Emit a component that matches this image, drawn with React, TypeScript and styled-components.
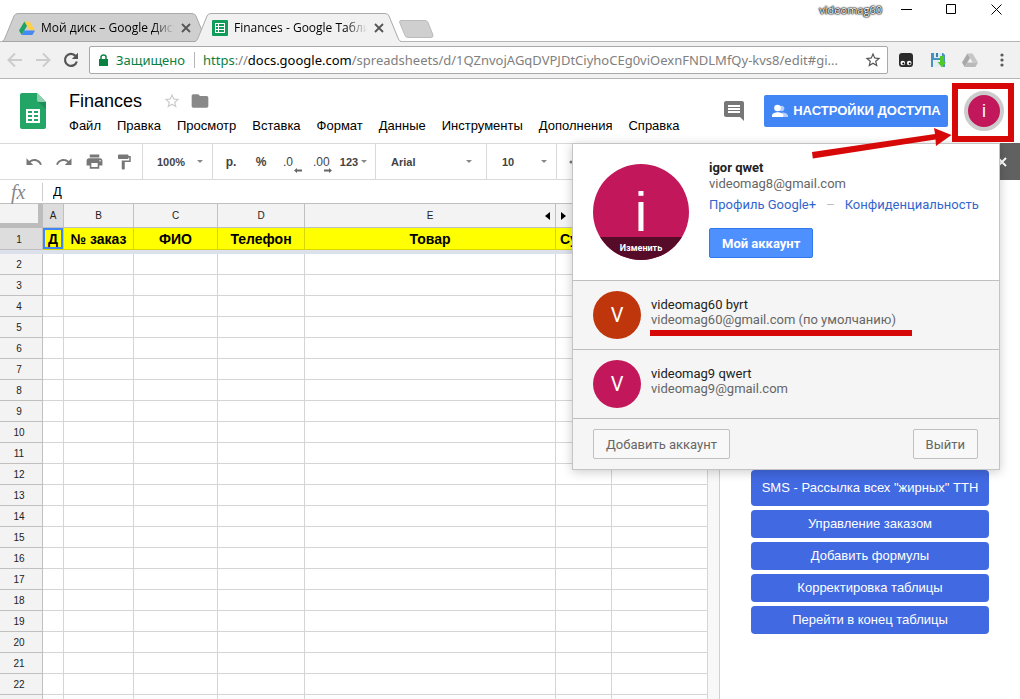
import React from 'react';
import styled, { createGlobalStyle } from 'styled-components';
import { MdUndo, MdRedo, MdPrint, MdFormatPaint, MdComment, MdFolder, MdStarBorder } from 'react-icons/md';

const sans = `"Liberation Sans", Arial, sans-serif`;
const system = `"Open Sans", "Noto Sans", sans-serif`;
const roboto = `Roboto, sans-serif`;

const GlobalStyle = createGlobalStyle`
  *, *::before, *::after { box-sizing: border-box; }
  body { margin: 0; background: #fff; font-family: ${sans}; color: #000; }
  button, input, select { font: inherit; color: inherit; margin: 0; padding: 0; border: 0; background: none; }
  button { cursor: pointer; }
  svg { display: block; flex: none; }
`;

const Screen = styled.div`
  display: flex;
  flex-direction: column;
  height: 100vh;
  overflow: hidden;
`;

/* ---------- Browser frame ---------- */

const TabStrip = styled.div`
  display: flex;
  align-items: flex-end;
  height: 42px;
  flex: none;
  padding-left: 2px;
  box-shadow: inset 0 -1px #b5b5b5;
  font: 12px/16px ${system};
`;

const Tab = styled.div<{ $active?: boolean }>`
  position: relative;
  z-index: ${p => (p.$active ? 2 : 1)};
  display: flex;
  align-items: center;
  width: 206px;
  height: 29px;
  margin-right: -13px;
  padding: 0 17px;
`;

const TabShape = styled.svg`
  position: absolute;
  inset: 0;
  z-index: -1;
`;

const TabTitle = styled.span`
  flex: 1;
  margin: 0 7px 0 6px;
  overflow: hidden;
  white-space: nowrap;
  mask-image: linear-gradient(to right, #000 84%, transparent);
`;

const IconButton = styled.button`
  display: flex;
  align-items: center;
  justify-content: center;
  color: inherit;
`;

const NewTab = styled(IconButton)`
  margin: 0 0 4px 11px;
`;

const WindowControls = styled.div`
  display: flex;
  align-items: center;
  align-self: flex-start;
  height: 19px;
  margin-left: auto;
`;

const UserBadge = styled.span`
  margin-right: 19px;
  font: 11px/16px ${system};
  color: #fff;
  text-shadow: 0 0 1px #000, 0 0 1px #000, 0 0 2px #222, 0 0 2px #222;
`;

const WindowButton = styled(IconButton)`
  width: 11px;
  height: 11px;
  margin-right: 34px;
  &:last-child { margin-right: 18px; }
`;

const AddressRow = styled.div`
  display: flex;
  align-items: center;
  flex: none;
  height: 37px;
  padding: 0 10px 0 7px;
  background: #f1f1f1;
  border-bottom: 1px solid #b5b5b5;
  color: #555;
`;

const NavButtons = styled.div`
  display: flex;
  gap: 12px;
  width: 82px;
`;

const AddressBox = styled.div`
  display: flex;
  align-items: center;
  flex: 1;
  min-width: 0;
  height: 28px;
  padding: 0 5px 0 9px;
  border: 1px solid #a9a9a9;
  border-radius: 2px;
  background: #fff;
  font: 13px/20px "Noto Sans", sans-serif;
`;

const Secure = styled.span`
  margin-left: 8px;
  padding-right: 9px;
  border-right: 1px solid #b5b5b5;
  line-height: 16px;
  color: #0b8043;
`;

const Url = styled.div`
  flex: 1;
  min-width: 0;
  margin: 0 8px;
  overflow: hidden;
  white-space: nowrap;
  text-overflow: ellipsis;
  color: #808080;
  b { font-weight: 400; color: #0b8043; }
  em { font-style: normal; color: #000; }
`;

const Extensions = styled.div`
  display: flex;
  align-items: center;
  gap: 16px;
  margin-left: 10px;
`;

/* ---------- Document header ---------- */

const Header = styled.header`
  position: relative;
  z-index: 5;
  display: flex;
  flex: none;
  height: 64px;
  padding: 0 16px 0 20px;
`;

const Logo = styled.svg`
  margin-top: 14px;
`;

const DocInfo = styled.div`
  flex: 1;
  min-width: 0;
  margin-left: 15px;
`;

const TitleRow = styled.div`
  display: flex;
  align-items: center;
  gap: 9px;
  height: 24px;
  margin-top: 10px;
  padding-left: 8px;
`;

const Title = styled.h1`
  margin: 0 12px 0 0;
  font: 18px/24px ${sans};
`;

const MenuBar = styled.nav`
  display: flex;
  margin-top: 4px;
`;

const MenuButton = styled.button`
  padding: 0 8px;
  font: 13px/18px ${sans};
  white-space: nowrap;
`;

const HeaderActions = styled.div`
  display: flex;
  align-items: center;
  height: 64px;
`;

const ShareButton = styled.button`
  display: flex;
  align-items: center;
  justify-content: center;
  gap: 4px;
  width: 184px;
  height: 32px;
  margin: 0 16px 0 18px;
  border-radius: 2px;
  background: #4285f4;
  color: #fff;
  font: bold 13px/20px ${sans};
  white-space: nowrap;
`;

const AccountButton = styled.button`
  width: 40px;
  height: 40px;
  border: 4px solid #ccc;
  border-radius: 50%;
  background: #c2185b;
  color: #fff;
  font: 18px/32px ${sans};
`;

const RedFrame = styled.div`
  position: absolute;
  top: 4px;
  right: 6px;
  width: 62px;
  height: 59px;
  border: 6px solid #d60808;
  pointer-events: none;
`;

const RedArrow = styled.svg`
  position: absolute;
  top: 48px;
  right: 68px;
  z-index: 2;
  pointer-events: none;
`;

/* ---------- Account popup ---------- */

const Popup = styled.section`
  position: absolute;
  top: 64px;
  right: 20px;
  width: 428px;
  border: 1px solid #c4c4c4;
  background: #f5f5f5;
  box-shadow: 0 2px 10px rgba(0, 0, 0, 0.2);
  font: 13px/15px ${roboto};
  color: #666;
`;

const CurrentAccount = styled.div`
  display: flex;
  gap: 20px;
  height: 137px;
  padding: 20px;
  border-bottom: 1px solid #bfbfbf;
  background: #fff;
`;

const BigAvatar = styled.button`
  display: flex;
  flex-direction: column;
  width: 96px;
  height: 96px;
  overflow: hidden;
  border-radius: 50%;
  background: #c2185b;
  color: #fff;
  text-align: center;
  font: 56px/96px ${sans};
`;

const BigLetter = styled.span`
  width: 100%;
  height: 73px;
`;

const ChangeLabel = styled.span`
  width: 100%;
  height: 23px;
  background: #560b28;
  font: bold 9px/23px ${roboto};
`;

const AccountDetails = styled.div`
  display: flex;
  flex-direction: column;
  align-items: flex-start;
  margin-top: -4px;
`;

const AccountName = styled.strong<{ $plain?: boolean }>`
  display: block;
  margin-bottom: ${p => (p.$plain ? 0 : 1)}px;
  font-weight: ${p => (p.$plain ? 400 : 700)};
  color: #222;
`;

const LinkRow = styled.div`
  display: flex;
  gap: 10px;
  margin: 6px 0 16px;
  color: #bbb;
  a { color: #36c; text-decoration: none; }
`;

const PrimaryButton = styled.button`
  height: 30px;
  padding: 0 12px;
  border: 1px solid #3079ed;
  border-radius: 2px;
  background: #4d90fe;
  color: #fff;
  font-weight: 700;
`;

const AccountRow = styled.button`
  display: flex;
  gap: 10px;
  width: 100%;
  height: 69px;
  padding: 10px 20px;
  border-bottom: 1px solid #bfbfbf;
  text-align: left;
`;

const Avatar = styled.span<{ $color: string }>`
  width: 48px;
  height: 48px;
  border-radius: 50%;
  background: ${p => p.$color};
  color: #fff;
  text-align: center;
  font: 20px/48px ${roboto};
`;

const AccountText = styled.span`
  position: relative;
  padding-top: 6px;
`;

const Underline = styled.span`
  position: absolute;
  top: 39px;
  left: -1px;
  width: 262px;
  height: 6px;
  background: #d60808;
`;

const PopupFooter = styled.div`
  display: flex;
  justify-content: space-between;
  padding: 10px 21px 10px 20px;
`;

const PlainButton = styled.button`
  height: 30px;
  padding: 0 12px;
  border: 1px solid #c0c0c0;
  border-radius: 2px;
  background: #f8f8f8;
`;

/* ---------- Workspace ---------- */

const Workspace = styled.div`
  display: flex;
  flex: 1;
  min-height: 0;
`;

const Sheet = styled.main`
  display: flex;
  flex-direction: column;
  flex: 1;
  min-width: 0;
`;

const Toolbar = styled.div`
  display: flex;
  flex: none;
  height: 37px;
  border: solid #d9d9d9;
  border-width: 1px 0;
  overflow: hidden;
  color: #777;
`;

const ToolGroup = styled.div<{ $width?: number; $pad: number }>`
  display: flex;
  align-items: center;
  flex: none;
  width: ${p => (p.$width ? `${p.$width}px` : 'auto')};
  padding-left: ${p => p.$pad}px;
  border-right: ${p => (p.$width ? '1px solid #d9d9d9' : '0')};
`;

const ToolButton = styled(IconButton)`
  width: 30px;
  height: 30px;
  color: #777;
`;

const TextTool = styled(ToolButton)<{ $size?: number }>`
  color: #444;
  font: bold ${p => p.$size ?? 12}px/16px ${sans};
`;

const DecimalTool = styled(TextTool)`
  flex-direction: column;
  align-items: flex-start;
  padding: 6px 0 0 7px;
  font-weight: 400;
  line-height: 12px;
  svg { align-self: flex-end; margin-right: 4px; }
`;

const FormatTool = styled(TextTool)`
  width: 35px;
  gap: 3px;
`;

const SelectBox = styled.label<{ $end?: number }>`
  display: flex;
  align-items: center;
  width: 100%;
  padding-right: ${p => p.$end ?? 9}px;
  color: #777;
`;

const Select = styled.select`
  flex: 1;
  min-width: 0;
  appearance: none;
  color: #444;
  font: bold 11px/16px ${sans};
`;

const FormulaBar = styled.label`
  display: flex;
  align-items: center;
  flex: none;
  height: 24px;
  border-bottom: 1px solid #c0c0c0;
`;

const Fx = styled.span`
  width: 43px;
  padding-left: 11px;
  border-right: 1px solid #ccc;
  font: italic 20px/18px "Liberation Serif", serif;
  color: #888;
`;

const FormulaInput = styled.input`
  flex: 1;
  min-width: 0;
  padding-left: 10px;
  font: 13px/18px ${sans};
  outline: 0;
`;

const GridArea = styled.div`
  display: flex;
  flex: 1;
  min-height: 0;
  overflow: hidden;
`;

const Grid = styled.table`
  flex: 1;
  align-self: flex-start;
  width: 100%;
  table-layout: fixed;
  border-spacing: 0;
`;

const ColHead = styled.th<{ $selected?: boolean }>`
  height: 24px;
  padding: 0;
  border: solid #c0c0c0;
  border-width: 0 1px 1px 0;
  background: ${p => (p.$selected ? '#ddd' : '#f3f3f3')};
  font: 10px/22px ${sans};
  color: #222;
`;

const Corner = styled.td`
  padding: 0;
  border: solid #bcbcbc;
  border-width: 0 5px 5px 0;
  background: #f3f3f3;
`;

const ColLabel = styled.div`
  display: grid;
  grid-template-columns: 5px 1fr 5px;
  align-items: center;
  padding: 0 5px;
  span { grid-column: 2; }
`;

const RowHead = styled.th<{ $selected?: boolean }>`
  padding: 2px 4px 0 0;
  border: solid #c0c0c0;
  border-width: 0 1px 1px 0;
  background: ${p => (p.$selected ? '#ddd' : '#f3f3f3')};
  font: 10px/18px ${sans};
  color: #222;
`;

const TitleCell = styled.td<{ $selected?: boolean; $start?: boolean }>`
  height: 22px;
  padding: 0;
  padding-left: ${p => (p.$start ? 4 : 0)}px;
  overflow: hidden;
  border: solid #d6d600;
  border-width: 0 1px 1px 0;
  background: #ff0;
  box-shadow: ${p => (p.$selected ? 'inset 0 0 0 2px #4285f4' : 'none')};
  text-align: ${p => (p.$start ? 'left' : 'center')};
  white-space: nowrap;
  font: bold 14px/20px ${sans};
`;

const FreezeBar = styled.td`
  height: 4px;
  padding: 0;
  background: #dbe0ea;
`;

const Cell = styled.td`
  height: 21px;
  padding: 0;
  border: solid #d5d5d5;
  border-width: 0 1px 1px 0;
`;

const ScrollTrack = styled.div`
  width: 11px;
  flex: none;
  background: #f8f8f8;
`;

const SidePanel = styled.aside`
  flex: none;
  width: 301px;
  border-left: 1px solid #d0d0d0;
`;

const SideHeader = styled.div`
  display: flex;
  align-items: center;
  justify-content: flex-end;
  height: 37px;
  padding-right: 13px;
  background: #616161;
  color: #fff;
`;

const SideActions = styled.div`
  display: flex;
  flex-direction: column;
  gap: 4px;
  padding: 290px 31px 0;
`;

const SideButton = styled.button<{ $tall?: boolean }>`
  height: ${p => (p.$tall ? 36 : 28)}px;
  border-radius: 4px;
  background: #4169e1;
  color: #fff;
  font: 13px/20px ${sans};
  white-space: nowrap;
`;

const Caret = () => (
  <svg width="6" height="3" viewBox="0 0 6 3"><path d="M0 0h6L3 3z" fill="#888" /></svg>
);

const CloseGlyph = ({ width, color }: { width: number; color: string }) => (
  <svg width="10" height="10" viewBox="0 0 10 10"><path d="M1 1l8 8M9 1L1 9" stroke={color} strokeWidth={width} /></svg>
);

const TabBackground = ({ fill }: { fill: string }) => (
  <TabShape width="206" height="29" viewBox="0 0 206 29">
    <path d="M0 29L2 27 12 3Q13 .5 16 .5H190Q193 .5 194 3L204 27 206 29z" fill={fill} />
    <path d="M0 28.500Q2 28 3 25L12 3Q13 .5 16 .5H190Q193 .5 194 3L203 25Q204 28 206 28.500" fill="none" stroke="#aaa" />
    {fill !== '#f1f1f1' && <path d="M1 28.500H205" stroke="#a5a5a5" />}
  </TabShape>
);

const DriveIcon = ({ mono }: { mono?: boolean }) => (
  <svg width="16" height="16" viewBox="0 0 16 16">
    <path d="M5.400 1.500h5.200L16 10.500h-5.300z" fill={mono ? '#c6c6c6' : '#ffcf48'} />
    <path d="M5.400 1.500L8 6 2.700 15 0 10.500z" fill={mono ? '#a9a9a9' : '#1da462'} />
    <path d="M5.300 10.500H16L13.400 15H2.700z" fill={mono ? '#b9b9b9' : '#4688f4'} />
  </svg>
);

const SheetsTabIcon = () => (
  <svg width="16" height="16" viewBox="0 0 16 16">
    <rect width="16" height="16" rx="1" fill="#0f9d58" />
    <path d="M3 3h10v10H3z" fill="#fff" />
    <path d="M4 4h2v2H4zM7 4h5v2H7zM4 7h2v2H4zM7 7h5v2H7zM4 10h2v2H4zM7 10h5v2H7z" fill="#0f9d58" />
  </svg>
);

const ShareIcon = () => (
  <svg width="18" height="16" viewBox="0 0 18 16" fill="#fff">
    <g opacity=".6"><circle cx="10.500" cy="5.500" r="2.800" /><path d="M11 9.500c3.500 0 6 1.300 6 3.500v1h-4z" /></g>
    <circle cx="6.500" cy="5" r="3.300" />
    <path d="M1 14v-1.500C1 10.500 4.500 9.300 6.800 9.300s5.800 1.200 5.800 3.200V14z" />
  </svg>
);

const columns = [43, 21, 70, 84, 87, 251, 56];
const letters = ['A', 'B', 'C', 'D'];
const menus = ['Файл', 'Правка', 'Просмотр', 'Вставка', 'Формат', 'Данные', 'Инструменты', 'Дополнения', 'Справка'];
const actions = ['Управление заказом', 'Добавить формулы', 'Корректировка таблицы', 'Перейти в конец таблицы'];
const rows = Array.from({ length: 22 }, (_, i) => i + 2);
const accounts = [
  { name: 'videomag60 byrt', mail: 'videomag60@gmail.com (по умолчанию)', color: '#bf360c', marked: true },
  { name: 'videomag9 qwert', mail: 'videomag9@gmail.com', color: '#c2185b', marked: false },
];

const BrowserFrame = () => (
  <>
    <TabStrip>
      <Tab>
        <TabBackground fill="#cfcfcf" />
        <DriveIcon />
        <TabTitle>Мой диск – Google Диск</TabTitle>
        <IconButton aria-label="Закрыть вкладку"><CloseGlyph width={1.8} color="#555" /></IconButton>
      </Tab>
      <Tab $active>
        <TabBackground fill="#f1f1f1" />
        <SheetsTabIcon />
        <TabTitle>Finances - Google Таблицы</TabTitle>
        <IconButton aria-label="Закрыть вкладку"><CloseGlyph width={1.8} color="#555" /></IconButton>
      </Tab>
      <NewTab aria-label="Новая вкладка">
        <svg width="35" height="18" viewBox="0 0 35 18"><path d="M2 .5H26Q28 .5 29 2.500L34 15Q34.500 17.500 32 17.500H9Q7 17.500 6 15.500L.7 2.500Q.3 .5 2 .5z" fill="#cfcfcf" stroke="#bbb" /></svg>
      </NewTab>
      <WindowControls>
        <UserBadge>videomag60</UserBadge>
        <WindowButton aria-label="Свернуть"><svg width="11" height="11"><path d="M0 5.500h11" stroke="#000" /></svg></WindowButton>
        <WindowButton aria-label="Развернуть"><svg width="11" height="11"><path d="M.5 .5h9v9h-9z" stroke="#000" fill="none" /></svg></WindowButton>
        <WindowButton aria-label="Закрыть"><svg width="11" height="11"><path d="M.5 .5l10 10M10.500 .5l-10 10" stroke="#000" /></svg></WindowButton>
      </WindowControls>
    </TabStrip>
    <AddressRow>
      <NavButtons>
        <IconButton aria-label="Назад"><svg width="16" height="16" fill="none" stroke="#ccc" strokeWidth="2"><path d="M15 8H2M8 1.500L1.500 8 8 14.500" /></svg></IconButton>
        <IconButton aria-label="Вперёд"><svg width="16" height="16" fill="none" stroke="#ccc" strokeWidth="2"><path d="M1 8h13M8 1.500L14.500 8 8 14.500" /></svg></IconButton>
        <IconButton aria-label="Обновить">
          <svg width="16" height="16" viewBox="0 0 16 16"><path d="M12.600 4A6 6 0 1 0 13.800 9.500" fill="none" stroke="#555" strokeWidth="2.200" /><path d="M15 .8V7H8.800z" fill="#555" /></svg>
        </IconButton>
      </NavButtons>
      <AddressBox>
        <svg width="9" height="12" viewBox="0 0 9 12"><path d="M0 5h9v7H0z" fill="#0b8043" /><path d="M2 5V3a2.500 2 0 0 1 5 0v2" fill="none" stroke="#0b8043" strokeWidth="1.500" /></svg>
        <Secure>Защищено</Secure>
        <Url role="textbox" aria-label="Адрес"><b>https</b>://<em>docs.google.com</em>/spreadsheets/d/1QZnvojAGqDVPJDtCiyhoCEg0viOexnFNDLMfQy-kvs8/edit#gi...</Url>
        <IconButton aria-label="В закладки"><MdStarBorder size={18} /></IconButton>
      </AddressBox>
      <Extensions>
        <IconButton aria-label="Tampermonkey">
          <svg width="16" height="16" viewBox="0 0 16 16"><rect x="1" y="1" width="14" height="14" rx="3" fill="#2b2b2b" /><circle cx="4.800" cy="11" r="2.300" fill="#fff" /><circle cx="11.200" cy="11" r="2.300" fill="#fff" /><circle cx="5.300" cy="11.500" r="1" /><circle cx="11.700" cy="11.500" r="1" /></svg>
        </IconButton>
        <IconButton aria-label="Сохранить">
          <svg width="16" height="16" viewBox="0 0 16 16"><path d="M1 1h12l2 2v12H1z" fill="#4a92bd" /><path d="M4 1h8v5H4z" fill="#d8edf5" /><path d="M6 1h2v4H6z" fill="#3d7fa8" /><path d="M3 8h10v7H3z" fill="#e4eef2" /><path d="M10 4h4v6h2L12 15.500 7.500 10H10z" fill="#4fc929" /></svg>
        </IconButton>
        <IconButton aria-label="Google Диск"><DriveIcon mono /></IconButton>
        <IconButton aria-label="Меню"><svg width="16" height="16" fill="#5a5a5a"><circle cx="8" cy="3" r="1.600" /><circle cx="8" cy="8" r="1.600" /><circle cx="8" cy="13" r="1.600" /></svg></IconButton>
      </Extensions>
    </AddressRow>
  </>
);

const AccountPopup = () => (
  <Popup aria-label="Аккаунты">
    <CurrentAccount>
      <BigAvatar>
        <BigLetter>i</BigLetter>
        <ChangeLabel>Изменить</ChangeLabel>
      </BigAvatar>
      <AccountDetails>
        <AccountName>igor qwet</AccountName>
        <span>videomag8@gmail.com</span>
        <LinkRow>
          <a href="#profile">Профиль Google+</a>
          <span>–</span>
          <a href="#privacy">Конфиденциальность</a>
        </LinkRow>
        <PrimaryButton>Мой аккаунт</PrimaryButton>
      </AccountDetails>
    </CurrentAccount>
    {accounts.map(a => (
      <AccountRow key={a.name}>
        <Avatar $color={a.color}>V</Avatar>
        <AccountText>
          <AccountName as="span" $plain>{a.name}</AccountName>
          {a.mail}
          {a.marked && <Underline />}
        </AccountText>
      </AccountRow>
    ))}
    <PopupFooter>
      <PlainButton>Добавить аккаунт</PlainButton>
      <PlainButton>Выйти</PlainButton>
    </PopupFooter>
  </Popup>
);

const DocHeader = () => (
  <Header>
    <Logo width="26" height="36" viewBox="0 0 26 36">
      <path d="M2 0h15l9 9v25a2 2 0 0 1-2 2H2a2 2 0 0 1-2-2V2a2 2 0 0 1 2-2z" fill="#23a566" />
      <path d="M17 0l9 9h-7a2 2 0 0 1-2-2z" fill="#8ed1b1" />
      <path d="M18 9h8v7z" fill="#1c8f56" />
      <path d="M6 16h14v14H6z" fill="#fff" />
      <path d="M8 18h4v2H8zM14 18h4v2h-4zM8 22h4v2H8zM14 22h4v2h-4zM8 26h4v2H8zM14 26h4v2h-4z" fill="#23a566" />
    </Logo>
    <DocInfo>
      <TitleRow>
        <Title>Finances</Title>
        <IconButton aria-label="Пометить"><MdStarBorder size={18} color="#ccc" /></IconButton>
        <IconButton aria-label="Папка"><MdFolder size={20} color="#888" /></IconButton>
      </TitleRow>
      <MenuBar>{menus.map(m => <MenuButton key={m}>{m}</MenuButton>)}</MenuBar>
    </DocInfo>
    <HeaderActions>
      <IconButton aria-label="Комментарии"><MdComment size={24} color="#777" /></IconButton>
      <ShareButton><ShareIcon />НАСТРОЙКИ ДОСТУПА</ShareButton>
      <AccountButton>i</AccountButton>
    </HeaderActions>
    <AccountPopup />
    <RedFrame />
    <RedArrow width="140" height="32" viewBox="0 0 140 32">
      <path d="M0 25L123 7 122 1 139.500 8 124 19 123.500 12.500 .8 31.500z" fill="#d60808" />
    </RedArrow>
  </Header>
);

const SheetToolbar = () => (
  <Toolbar>
    <ToolGroup $width={143} $pad={19}>
      <ToolButton aria-label="Отменить"><MdUndo size={18} /></ToolButton>
      <ToolButton aria-label="Повторить"><MdRedo size={18} /></ToolButton>
      <ToolButton aria-label="Печать"><MdPrint size={19} /></ToolButton>
      <ToolButton aria-label="Формат"><MdFormatPaint size={18} /></ToolButton>
    </ToolGroup>
    <ToolGroup $width={70} $pad={14}>
      <SelectBox><Select aria-label="Масштаб"><option>100%</option></Select><Caret /></SelectBox>
    </ToolGroup>
    <ToolGroup $width={163} $pad={3}>
      <TextTool>р.</TextTool>
      <TextTool>%</TextTool>
      <DecimalTool aria-label="Меньше знаков">.0<svg width="8" height="5" fill="#666"><path d="M0 2.500L3 0v1.500h5v2H3V5z" /></svg></DecimalTool>
      <DecimalTool aria-label="Больше знаков">.00<svg width="8" height="5" fill="#666"><path d="M8 2.500L5 0v1.500H0v2h5V5z" /></svg></DecimalTool>
      <FormatTool $size={11}>123<Caret /></FormatTool>
    </ToolGroup>
    <ToolGroup $width={111} $pad={15}>
      <SelectBox $end={14}><Select aria-label="Шрифт"><option>Arial</option></Select><Caret /></SelectBox>
    </ToolGroup>
    <ToolGroup $width={70} $pad={15}>
      <SelectBox><Select aria-label="Размер"><option>10</option></Select><Caret /></SelectBox>
    </ToolGroup>
    <ToolGroup $pad={5}>
      <ToolButton aria-label="Ещё"><svg width="16" height="4" fill="#777"><circle cx="2" cy="2" r="1.500" /><circle cx="8" cy="2" r="1.500" /><circle cx="14" cy="2" r="1.500" /></svg></ToolButton>
    </ToolGroup>
  </Toolbar>
);

const SheetGrid = () => (
  <GridArea>
    <Grid>
      <colgroup>
        {columns.map((w, i) => <col key={i} width={w} />)}
        <col />
      </colgroup>
      <thead>
        <tr>
          <Corner />
          {letters.map(l => <ColHead key={l} $selected={l === 'A'}>{l}</ColHead>)}
          <ColHead><ColLabel><span>E</span><svg width="5" height="8"><path d="M5 0v8L0 4z" /></svg></ColLabel></ColHead>
          <ColHead><ColLabel><svg width="5" height="8"><path d="M0 0v8l5-4z" /></svg><span>F</span></ColLabel></ColHead>
          <ColHead>G</ColHead>
        </tr>
      </thead>
      <tbody>
        <tr>
          <RowHead $selected>1</RowHead>
          <TitleCell $selected>Д</TitleCell>
          <TitleCell>№ заказ</TitleCell>
          <TitleCell>ФИО</TitleCell>
          <TitleCell>Телефон</TitleCell>
          <TitleCell>Товар</TitleCell>
          <TitleCell $start>Сумма</TitleCell>
          <TitleCell />
        </tr>
        <tr><FreezeBar colSpan={8} /></tr>
        {rows.map(n => (
          <tr key={n}>
            <RowHead>{n}</RowHead>
            {Array.from({ length: 7 }, (_, i) => <Cell key={i} />)}
          </tr>
        ))}
      </tbody>
    </Grid>
    <ScrollTrack />
  </GridArea>
);

export default function App() {
  return (
    <Screen>
      <GlobalStyle />
      <BrowserFrame />
      <DocHeader />
      <Workspace>
        <Sheet>
          <SheetToolbar />
          <FormulaBar>
            <Fx>fx</Fx>
            <FormulaInput aria-label="Формула" defaultValue="Д" />
          </FormulaBar>
          <SheetGrid />
        </Sheet>
        <SidePanel>
          <SideHeader>
            <IconButton aria-label="Закрыть панель"><CloseGlyph width={2} color="#fff" /></IconButton>
          </SideHeader>
          <SideActions>
            <SideButton $tall>SMS - Рассылка всех "жирных" ТТН</SideButton>
            {actions.map(a => <SideButton key={a}>{a}</SideButton>)}
          </SideActions>
        </SidePanel>
      </Workspace>
    </Screen>
  );
}
